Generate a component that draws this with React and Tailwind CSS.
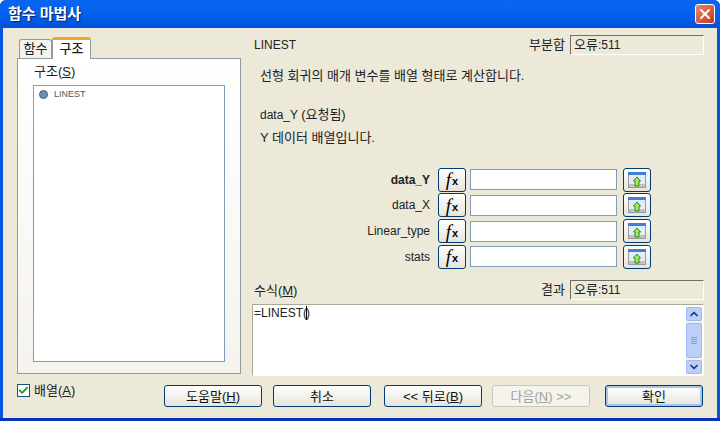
import { Check, ChevronUp, ChevronDown, X } from 'lucide-react'

const FONT = 'font-["Liberation_Sans","Noto_Sans_CJK_KR",sans-serif]'

const ARGS = [
    { label: 'data_Y', bold: true },
    { label: 'data_X' },
    { label: 'Linear_type' },
    { label: 'stats' },
]

function PickerIcon() {
    return (
        <svg width="18" height="16" viewBox="0 0 18 16">
            <rect x="0.5" y="0.5" width="17" height="15" fill="#f4f3ee" stroke="#9a9c98" />
            <rect x="0" y="0" width="18" height="3" fill="#3f7fd8" />
            <rect x="1" y="3" width="16" height="9" fill="#e2ecf9" />
            <rect x="1" y="12" width="16" height="3" fill="#c4c2b4" />
            <path d="M9 5 L12.5 9 H11 V14 H7 V9 H5.5 Z" fill="#a6e85a" stroke="#2a8a2a" strokeWidth="1" />
        </svg>
    )
}

function ArgRow({ label, bold }) {
    return (
        <div className="flex items-center h-[25.67px] pr-[53px]">
            <span className={`flex-1 text-right text-[12px] pr-[8px] text-[#222] ${bold ? 'font-bold' : ''}`}>{label}</span>
            <button className="w-[28px] h-[24px] rounded-[3px] border border-[#003c74] bg-gradient-to-b from-white to-[#e6e4da] flex items-center justify-center text-black">
                <span className='font-["Liberation_Serif",serif] italic text-[19px] leading-none'>f</span>
                <span className="font-bold text-[11px] leading-none mt-[4px] ml-[1px]">x</span>
            </button>
            <div className="w-[147px] h-[21px] ml-[4px] bg-white border border-[#7f9db9]" />
            <button className="w-[28px] h-[24px] ml-[6px] rounded-[3px] border border-[#003c74] bg-gradient-to-b from-white to-[#e6e4da] flex items-center justify-center">
                <PickerIcon />
            </button>
        </div>
    )
}

function ReadonlyField({ label }) {
    return (
        <div className="flex items-center">
            <span className="text-[13px] text-[#222] mr-[5px]">{label}</span>
            <div className="w-[134px] h-[20px] border border-[#fff] border-t-[#716f64] border-l-[#716f64] pl-[3px] text-[13px] leading-[17px] text-[#222]">
                오류<span className="text-[12px]">:511</span>
            </div>
        </div>
    )
}

function DlgButton({ children, disabled, primary }) {
    return (
        <button
            className={`w-[98px] h-[22px] rounded-[3px] border text-[13px] leading-none flex items-center justify-center ${
                disabled
                    ? 'border-[#c9c7ba] bg-[#f4f3ee] text-[#a1a192]'
                    : primary
                      ? 'border-[#003c74] bg-gradient-to-b from-white to-[#e6e4da] text-[#111] shadow-[inset_0_0_0_2px_#a9c4ea]'
                      : 'border-[#003c74] bg-gradient-to-b from-white to-[#e6e4da] text-[#111]'
            }`}
        >
            {children}
        </button>
    )
}

export default function App() {
    return (
        <div className={`${FONT} w-[720px] h-[421px] flex flex-col overflow-hidden bg-[#0855dd] rounded-t-[6px]`}>
            {/* Title bar */}
            <div className="h-[28px] shrink-0 flex items-center justify-between pl-[8px] pr-[5px] bg-gradient-to-b from-[#0a66f0] via-[#0461f0] to-[#0350d8]">
                <span className="text-white font-bold text-[15px] [text-shadow:1px_1px_1px_#0a1f6e]">함수 마법사</span>
                <span className="w-[20px] h-[20px] rounded-[3px] border border-white bg-gradient-to-br from-[#e8886a] to-[#c23510] flex items-center justify-center">
                    <X className="w-[16px] h-[16px] text-white" strokeWidth={3} />
                </span>
            </div>

            {/* Client area */}
            <div className="flex-1 mx-[3px] bg-[#ece9d8] flex flex-col text-[#222]">
                <div className="flex h-[348px]">
                    {/* Left tab pane */}
                    <div className="w-[238px] pl-[14px] pt-[9px] pb-[2px] flex flex-col">
                        <div className="flex items-end h-[21px] pl-[2px] relative z-10">
                            <div className="w-[33px] h-[19px] border border-b-0 border-[#919b9c] rounded-t-[3px] bg-[#f4f3ee] text-[13px] text-center leading-[18px]">함수</div>
                            <div className="w-[39px] h-[22px] -mb-px border border-b-0 border-[#919b9c] border-t-[3px] border-t-[#f5a623] rounded-t-[3px] bg-white text-[13px] text-center leading-[18px] font-medium">구조</div>
                        </div>
                        <div className="flex-1 w-[224px] border border-[#919b9c] bg-gradient-to-b from-white to-[#f4f3ee] pl-[15px] pb-[11px] pr-[15px] flex flex-col">
                            <div className="h-[26px] text-[13px] leading-[26px] pl-[1px]">
                                구조(<span className="underline">S</span>)
                            </div>
                            <div className="flex-1 bg-white border border-[#7f9db9] pl-[5px] pt-[1px]">
                                <div className="flex items-center h-[15px]">
                                    <span className="w-[9px] h-[9px] rounded-full bg-[#6d90b0] border border-[#45607c]" />
                                    <span className="ml-[6px] text-[9px] text-[#555]">LINEST</span>
                                </div>
                            </div>
                        </div>
                    </div>

                    {/* Right pane */}
                    <div className="flex-1 pl-[12px] pr-[13px] flex flex-col">
                        <div className="flex items-center justify-between h-[20px] mt-[7px] pl-[1px]">
                            <span className="text-[12px]">LINEST</span>
                            <ReadonlyField label="부분합" />
                        </div>
                        <p className="text-[13px] leading-[16px] mt-[13px] pl-[7px]">선형 회귀의 매개 변수를 배열 형태로 계산합니다.</p>
                        <p className="text-[12px] leading-[16px] mt-[23px] pl-[7px]">data_Y <span className="text-[13px]">(요청됨)</span></p>
                        <p className="text-[13px] leading-[16px] mt-[7px] pl-[7px]">Y 데이터 배열입니다.</p>
                        <div className="mt-[21px] flex flex-col">
                            {ARGS.map(arg => (
                                <ArgRow key={arg.label} {...arg} />
                            ))}
                        </div>
                        <div className="flex items-center justify-between h-[20px] mt-[10px] pl-[1px]">
                            <span className="text-[13px] mt-[3px]">
                                수식(<span className="underline">M</span>)
                            </span>
                            <ReadonlyField label="결과" />
                        </div>
                        <div className="mt-[4px] -ml-px w-[452px] h-[72px] shrink-0 flex bg-white border border-[#fff] border-t-[#aca899] border-l-[#aca899] shadow-[0_0_0_1px_#ece9d8]">
                            <div className="flex-1 text-[12px] leading-[15px] pl-[1px] pt-[1px] text-[#222]">
                                =LINEST(<span className="inline-block w-px h-[14px] bg-black align-middle -mx-px" />)
                            </div>
                            <div className="w-[16px] mr-[1px] mt-[2px] mb-[1px] flex flex-col bg-[#f3f2ec] gap-[2px]">
                                <span className="h-[14px] rounded-[2px] bg-[#bccffb] border border-[#a0b8f0] flex items-center justify-center">
                                    <ChevronUp className="w-[12px] h-[12px] text-[#1a3a7a]" strokeWidth={3.5} />
                                </span>
                                <span className="flex-1 rounded-[2px] bg-[#bccffb] border border-[#a0b8f0] flex flex-col items-center justify-center gap-px">
                                    <span className="w-[6px] h-px bg-[#7f9ee6]" />
                                    <span className="w-[6px] h-px bg-[#7f9ee6]" />
                                    <span className="w-[6px] h-px bg-[#7f9ee6]" />
                                    <span className="w-[6px] h-px bg-[#7f9ee6]" />
                                </span>
                                <span className="h-[14px] rounded-[2px] bg-[#bccffb] border border-[#a0b8f0] flex items-center justify-center">
                                    <ChevronDown className="w-[12px] h-[12px] text-[#1a3a7a]" strokeWidth={3.5} />
                                </span>
                            </div>
                        </div>
                    </div>
                </div>

                {/* Footer */}
                <div className="flex items-start mt-[9px] pl-[14px]">
                    <div className="flex items-center w-[147px] h-[13px] mt-[-1px]">
                        <span className="w-[13px] h-[13px] border border-[#1c5180] bg-white flex items-center justify-center">
                            <Check className="w-[11px] h-[11px] text-[#21a121]" strokeWidth={4} />
                        </span>
                        <span className="ml-[4px] text-[13px]">
                            배열(<span className="underline">A</span>)
                        </span>
                    </div>
                    <DlgButton>도움말(<span className="underline">H</span>)</DlgButton>
                    <span className="w-[11px]" />
                    <DlgButton>취소</DlgButton>
                    <span className="w-[13px]" />
                    <DlgButton>{'<< 뒤로('}<span className="underline">B</span>)</DlgButton>
                    <span className="w-[10px]" />
                    <DlgButton disabled>다음(<span className="underline">N</span>{') >>'}</DlgButton>
                    <span className="w-[15px]" />
                    <DlgButton primary>확인</DlgButton>
                </div>
            </div>
            <div className="h-[3px] shrink-0 bg-[#0a2fb8]" />
        </div>
    )
}
